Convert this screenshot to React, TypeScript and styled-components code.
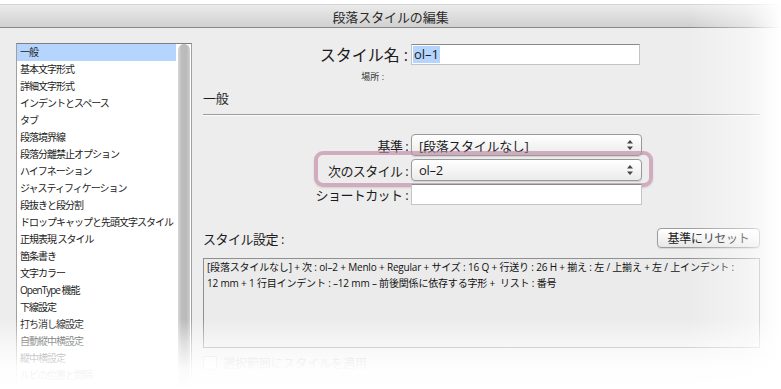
import styled, { createGlobalStyle } from "styled-components";

const GlobalStyle = createGlobalStyle`
  html, body {
    margin: 0;
    padding: 0;
    background: #fff;
  }
  body {
    font-family: "Open Sans", "Noto Sans CJK JP", sans-serif;
    color: #1c1c1c;
  }
`;

const Page = styled.div`
  position: relative;
  width: 781px;
  height: 389px;
  overflow: hidden;
  padding-top: 4px;
  box-sizing: border-box;
  background: #fff;
`;

const Window = styled.div`
  display: flex;
  flex-direction: column;
  height: 100%;
  background: #ededed;
  border-top: 1px solid #d4d4d4;
`;

const TitleBar = styled.div`
  height: 22px;
  display: flex;
  align-items: center;
  justify-content: center;
  background: linear-gradient(to bottom, #ebebeb, #d0d0d0);
  border-bottom: 1px solid #888;
  font-size: 13px;
  color: #2a2a2a;
  letter-spacing: -0.1px;
`;

const Body = styled.div`
  flex: 1;
  display: grid;
  grid-template-columns: 176px 557px;
  column-gap: 11px;
  padding: 15px 21px 0 16px;
  min-height: 0;
`;

const ListBox = styled.div`
  display: flex;
  background: #fff;
  border: 1px solid #a0a0a0;
  border-top-color: #7f7f7f;
  border-bottom: none;
`;

const ListItems = styled.ul`
  list-style: none;
  margin: 0;
  padding: 0;
  width: 159px;
`;

const ListItem = styled.li<{ $selected?: boolean }>`
  height: 17px;
  line-height: 17px;
  padding-left: 3px;
  font-size: 10px;
  letter-spacing: -1px;
  white-space: nowrap;
  color: #222;
  background: ${(p) => (p.$selected ? "#b5d5fe" : "transparent")};
`;

const ScrollTrack = styled.div`
  width: 12px;
  margin: 0 1px 0 2px;
  border-radius: 6px 6px 0 0;
  background: linear-gradient(to right, #d8d8d8, #bdbdbd 30%, #bababa 70%, #cfcfcf);
`;

const Panel = styled.div`
  display: flex;
  flex-direction: column;
  margin-top: -1px;
`;

const FieldRow = styled.div<{ $mt?: number }>`
  position: relative;
  display: grid;
  grid-template-columns: 205px 231px;
  column-gap: 3px;
  align-items: center;
  margin-top: ${(p) => p.$mt ?? 0}px;
`;

const Label = styled.label<{ $big?: boolean }>`
  text-align: right;
  font-size: ${(p) => (p.$big ? 16 : 13)}px;
  letter-spacing: ${(p) => (p.$big ? 0 : -0.6)}px;
  color: #1c1c1c;
  white-space: nowrap;
`;

const SmallLabel = styled.div`
  margin-top: 6px;
  width: 181px;
  text-align: right;
  font-size: 9px;
  line-height: 10px;
  color: #333;
`;

const TextInput = styled.div<{ $w?: number }>`
  height: 21px;
  width: ${(p) => p.$w ?? 229}px;
  box-sizing: border-box;
  background: #fff;
  border: 1px solid #c4c4c4;
  border-top-color: #8a8a8a;
  display: flex;
  align-items: center;
  padding-left: 1px;
  font-size: 13px;
`;

const Selected = styled.span`
  background: #b5d5fe;
  padding: 0 1px;
  line-height: 17px;
`;

const Heading = styled.div`
  margin-top: 7px;
  font-size: 13px;
  line-height: 18px;
  letter-spacing: -0.3px;
`;

const Rule = styled.div`
  margin-top: 7px;
  height: 1px;
  background: #9d9d9d;
  box-shadow: 0 1px 0 #fafafa;
`;

const Select = styled.div`
  height: 22px;
  box-sizing: border-box;
  border: 1px solid #9a9a9a;
  border-radius: 4px;
  background: linear-gradient(to bottom, #ffffff, #f3f3f3 60%, #ebebeb);
  box-shadow: 0 1px 1px rgba(0, 0, 0, 0.12);
  display: flex;
  align-items: center;
  justify-content: space-between;
  padding: 0 8px 0 7px;
  font-size: 13px;
  letter-spacing: -0.3px;
`;

const Highlight = styled.div`
  position: absolute;
  left: 111px;
  top: -8px;
  width: 339px;
  height: 36px;
  box-sizing: border-box;
  border: 4px solid rgba(190, 128, 158, 0.6);
  border-radius: 9px;
  box-shadow: 0 1px 2px rgba(0, 0, 0, 0.12);
  pointer-events: none;
`;

const SettingsHeader = styled.div`
  margin-top: 23px;
  height: 20px;
  display: flex;
  align-items: center;
  justify-content: space-between;
`;

const SectionTitle = styled.div`
  font-size: 13px;
  letter-spacing: -0.5px;
`;

const Button = styled.button`
  height: 20px;
  width: 103px;
  border: 1px solid #9c9c9c;
  border-radius: 4px;
  background: linear-gradient(to bottom, #ffffff, #f1f1f1 60%, #e6e6e6);
  box-shadow: 0 1px 1px rgba(0, 0, 0, 0.1);
  font-family: inherit;
  font-size: 12px;
  letter-spacing: -0.3px;
  color: #222;
  padding: 0;
`;

const SettingsBox = styled.div`
  margin-top: 10px;
  height: 90px;
  box-sizing: border-box;
  border: 1px solid #8f8f8f;
  background: #ebebeb;
  padding: 0 3px;
  font-size: 10px;
  line-height: 16px;
  letter-spacing: -0.18px;
  color: #111;
  white-space: nowrap;
`;

const CheckRow = styled.label`
  margin-top: 6px;
  display: flex;
  align-items: center;
  gap: 6px;
  font-size: 12px;
  color: #b0b0b0;
`;

const CheckBox = styled.span`
  width: 12px;
  height: 12px;
  border: 1px solid #c8c8c8;
  border-radius: 2px;
  background: #f6f6f6;
`;

const FadeRight = styled.div`
  position: absolute;
  top: 0;
  bottom: 0;
  left: 688px;
  right: 0;
  background: linear-gradient(
    to right,
    rgba(255, 255, 255, 0),
    rgba(255, 255, 255, 0.45) 65%,
    #fff 100%
  );
  pointer-events: none;
`;

const FadeBottom = styled.div`
  position: absolute;
  left: 0;
  right: 0;
  bottom: 0;
  height: 70px;
  background: linear-gradient(
    to bottom,
    rgba(255, 255, 255, 0),
    rgba(255, 255, 255, 0.55) 35%,
    rgba(255, 255, 255, 0.92) 70%,
    #fff 100%
  );
  pointer-events: none;
`;

function Arrows() {
  return (
    <svg width="6" height="10" viewBox="0 0 6 10">
      <path d="M3 0 L6 3.6 L0 3.6 Z" fill="#444" />
      <path d="M0 6.4 L6 6.4 L3 10 Z" fill="#444" />
    </svg>
  );
}

const categories = [
  "一般",
  "基本文字形式",
  "詳細文字形式",
  "インデントとスペース",
  "タブ",
  "段落境界線",
  "段落分離禁止オプション",
  "ハイフネーション",
  "ジャスティフィケーション",
  "段抜きと段分割",
  "ドロップキャップと先頭文字スタイル",
  "正規表現 スタイル",
  "箇条書き",
  "文字カラー",
  "OpenType 機能",
  "下線設定",
  "打ち消し線設定",
  "自動縦中横設定",
  "縦中横設定",
  "ルビの位置と間隔",
];

export default function App() {
  return (
    <>
      <GlobalStyle />
      <Page>
        <Window>
          <TitleBar>段落スタイルの編集</TitleBar>
          <Body>
            <ListBox>
              <ListItems>
                {categories.map((c, i) => (
                  <ListItem key={c} $selected={i === 0}>
                    {c}
                  </ListItem>
                ))}
              </ListItems>
              <ScrollTrack />
            </ListBox>

            <Panel>
              <FieldRow>
                <Label $big>スタイル名 :</Label>
                <TextInput>
                  <Selected>ol–1</Selected>
                </TextInput>
              </FieldRow>
              <SmallLabel>場所 :</SmallLabel>
              <Heading>一般</Heading>
              <Rule />

              <FieldRow $mt={19}>
                <Label>基準 :</Label>
                <Select>
                  <span>[段落スタイルなし]</span>
                  <Arrows />
                </Select>
              </FieldRow>
              <FieldRow $mt={3}>
                <Highlight />
                <Label>次のスタイル :</Label>
                <Select>
                  <span>ol–2</span>
                  <Arrows />
                </Select>
              </FieldRow>
              <FieldRow $mt={3}>
                <Label>ショートカット :</Label>
                <TextInput $w={231} />
              </FieldRow>

              <SettingsHeader>
                <SectionTitle>スタイル設定 :</SectionTitle>
                <Button>基準にリセット</Button>
              </SettingsHeader>
              <SettingsBox>
                [段落スタイルなし] + 次 : ol–2 + Menlo + Regular + サイズ : 16 Q + 行送り : 26 H + 揃え : 左 / 上揃え + 左 / 上インデント :
                <br />
                12 mm + 1 行目インデント : –12 mm – 前後関係に依存する字形 +&nbsp; リスト : 番号
              </SettingsBox>
              <CheckRow>
                <CheckBox />
                選択範囲にスタイルを適用
              </CheckRow>
            </Panel>
          </Body>
        </Window>
        <FadeRight />
        <FadeBottom />
      </Page>
    </>
  );
}
